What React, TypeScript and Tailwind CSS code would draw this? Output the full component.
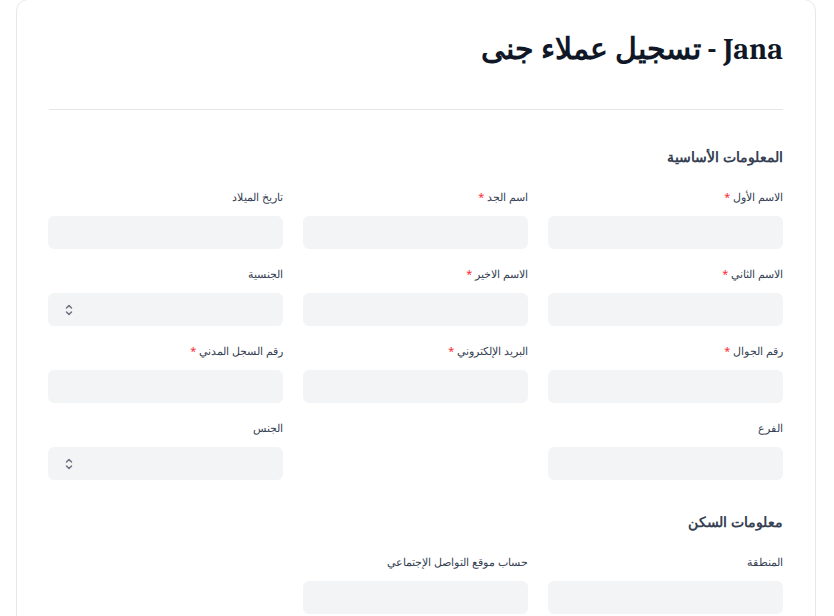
import React from "react";

type Field = { label: string; required?: boolean; select?: boolean; empty?: boolean };

const basic: Field[] = [
  { label: "الاسم الأول", required: true },
  { label: "اسم الجد", required: true },
  { label: "تاريخ الميلاد" },
  { label: "الاسم الثاني", required: true },
  { label: "الاسم الاخير", required: true },
  { label: "الجنسية", select: true },
  { label: "رقم الجوال", required: true },
  { label: "البريد الإلكتروني", required: true },
  { label: "رقم السجل المدني", required: true },
  { label: "الفرع" },
  { label: "", empty: true },
  { label: "الجنس", select: true },
];

const housing: Field[] = [
  { label: "المنطقة" },
  { label: "حساب موقع التواصل الإجتماعي" },
  { label: "", empty: true },
];

function UpDown() {
  return (
    <svg width="10" height="14" viewBox="0 0 10 14" fill="none" stroke="#6b7280" strokeWidth="1.5" strokeLinecap="round" strokeLinejoin="round">
      <path d="M2.5 5 L5 2.5 L7.5 5" />
      <path d="M2.5 9 L5 11.5 L7.5 9" />
    </svg>
  );
}

function FieldBox({ f }: { f: Field }) {
  if (f.empty) return <div />;
  return (
    <div className="flex flex-col">
      <label className="text-[11px] leading-5 text-gray-700 mb-[9px]">
        {f.label}
        {f.required && <span className="text-red-500"> *</span>}
      </label>
      <div className="h-[33px] rounded-md bg-gray-100 flex items-center justify-end pl-4">
        {f.select && <UpDown />}
      </div>
    </div>
  );
}

function Section({ title, fields }: { title: string; fields: Field[] }) {
  return (
    <section>
      <h2 className="text-[14px] leading-6 font-bold text-gray-700 mb-[18px]">{title}</h2>
      <div className="grid grid-cols-[235px_225px_235px] gap-x-5 gap-y-[15px]">
        {fields.map((f, i) => (
          <FieldBox key={i} f={f} />
        ))}
      </div>
    </section>
  );
}

export default function App() {
  return (
    <div className="min-h-screen bg-white font-sans">
      <div dir="rtl" className="ml-4 -mt-px w-[800px] rounded-xl border border-gray-200 bg-white p-8">
        <div className="pb-[41px] border-b border-gray-200">
          <h1 className="text-3xl leading-9 font-bold text-gray-900 font-serif">
            Jana - تسجيل عملاء جنى
          </h1>
        </div>
        <div className="mt-[35px] flex flex-col gap-[30px]">
          <Section title="المعلومات الأساسية" fields={basic} />
          <Section title="معلومات السكن" fields={housing} />
        </div>
      </div>
    </div>
  );
}
